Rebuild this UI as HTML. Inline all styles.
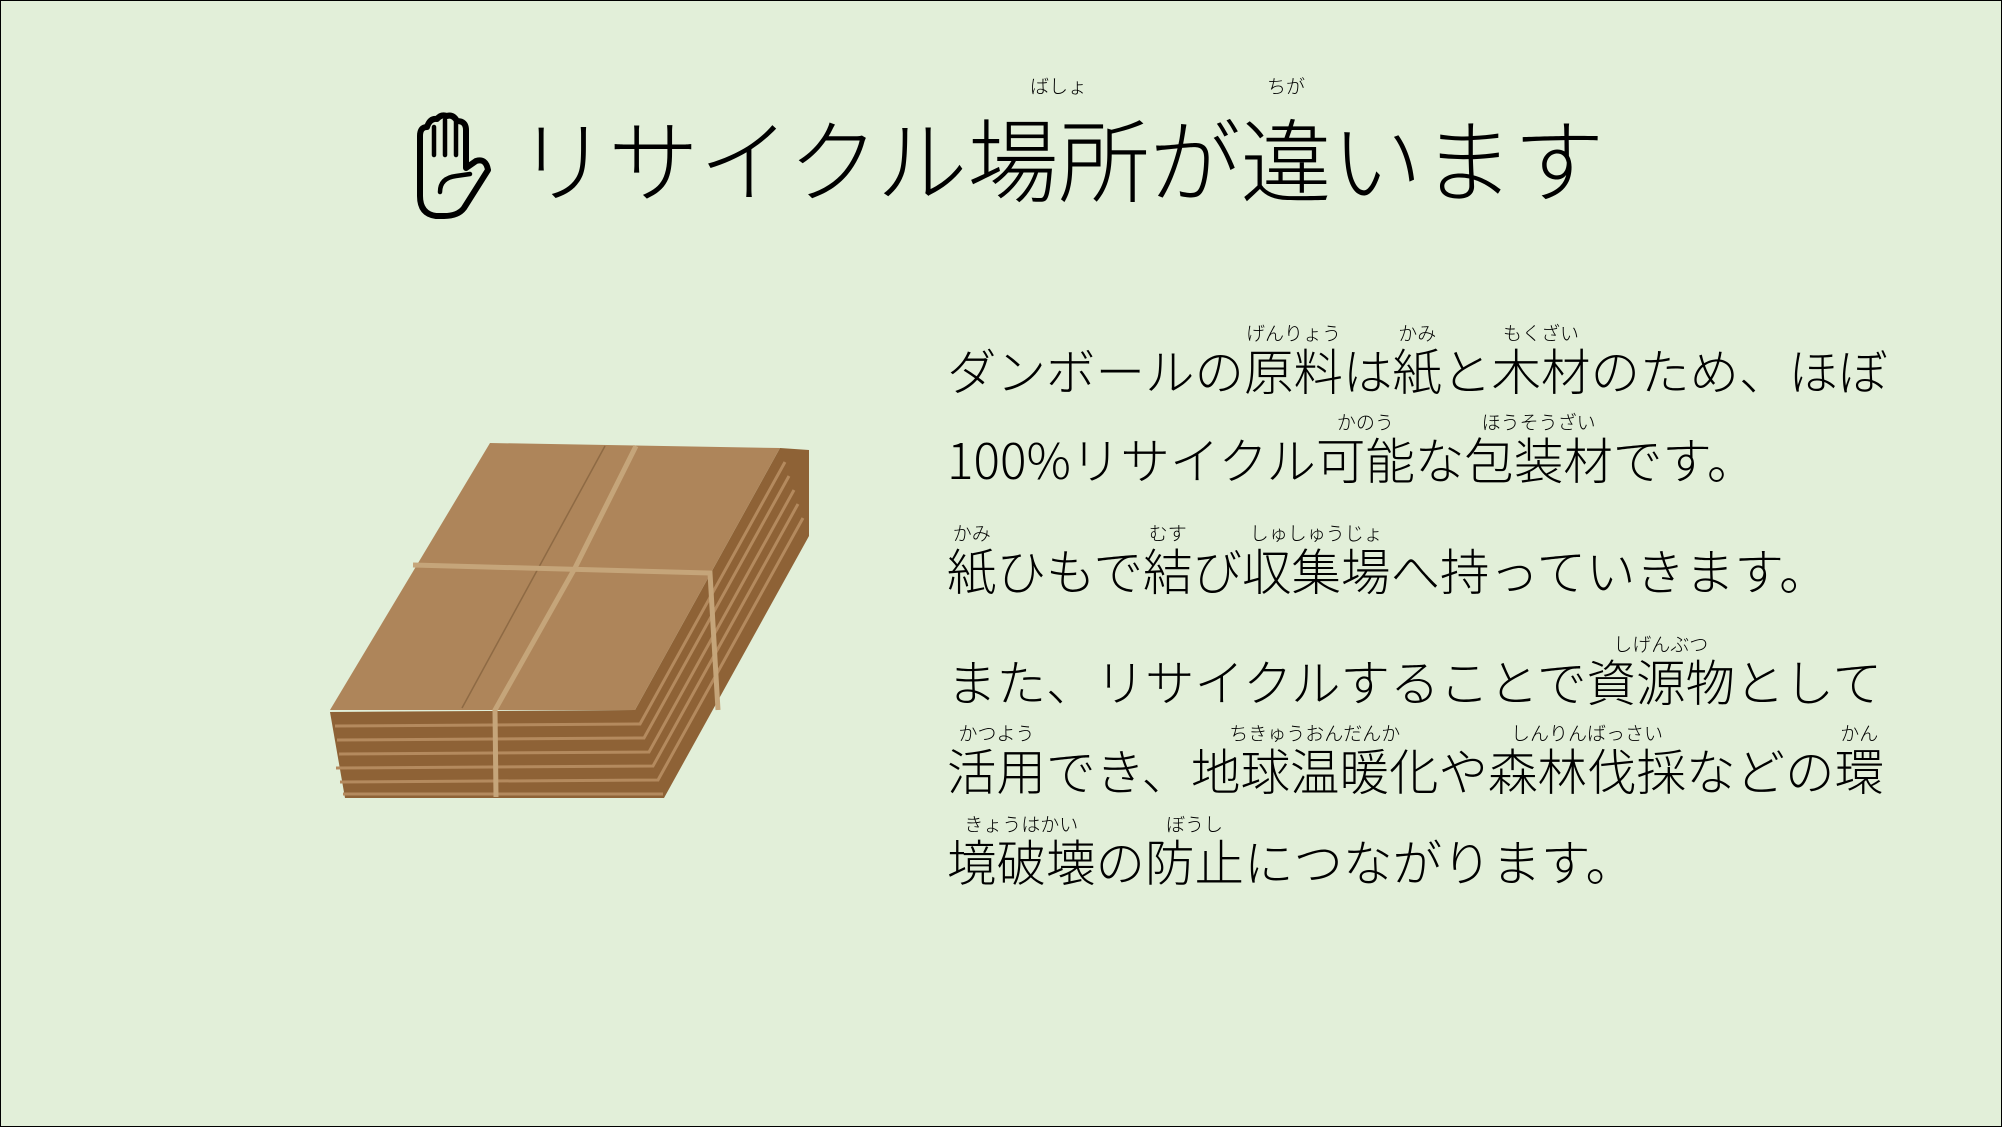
<!DOCTYPE html>
<html><head><meta charset="utf-8"><style>
html,body{margin:0;padding:0}
body{width:2002px;height:1127px;position:relative;background:#e2efd9;overflow:hidden;font-family:"Noto Sans CJK JP","Liberation Sans",sans-serif;color:#000}
.frame{position:absolute;left:0;top:0;width:2000px;height:1125px;border:1px solid #000}
.t{position:absolute;white-space:nowrap;font-weight:300}
ruby{ruby-align:center}
ruby rt{font-size:19px;line-height:1;ruby-align:center;letter-spacing:0}
.title{left:517px;top:94px;font-size:91px;line-height:91px}
.title rt{font-size:19px;position:relative;top:-18px}
.b{left:947px;font-size:49.5px;line-height:50px}
.b rt{position:relative;top:-3px}
</style></head><body>
<div class="frame"></div>
<svg style="position:absolute;left:400px;top:110px" width="110" height="110" viewBox="0 0 110 110">
<path d="M20 86 L20 26 Q20 17 27 17 Q30 8 37 9 Q41 4 47 6 Q53 4 57 11 Q66 11 66 20 L66 58 L76 51 Q86 48 88 60 L64 98 Q58 106 44 106 L36 106 Q20 104 20 86 Z" fill="none" stroke="#000" stroke-width="6" stroke-linejoin="round"/>
<path d="M34 17 L34 45 M45 10 L45 45 M56 12 L56 45" stroke="#000" stroke-width="4.5" stroke-linecap="round"/>
<path d="M40 82 Q40 68 56 66 L70 64" fill="none" stroke="#000" stroke-width="4.5" stroke-linecap="round"/>
</svg>
<div class="t title">リサイクル<ruby>場所<rt>ばしょ</rt></ruby>が<ruby>違<rt>ちが</rt></ruby>います</div>

<div class="t b" style="top:326px">ダンボールの<ruby>原料<rt>げんりょう</rt></ruby>は<ruby>紙<rt>かみ</rt></ruby>と<ruby>木材<rt>もくざい</rt></ruby>のため、ほぼ</div>
<div class="t b" style="top:415px">100%リサイクル<ruby>可能<rt>かのう</rt></ruby>な<ruby>包装材<rt>ほうそうざい</rt></ruby>です。</div>
<div class="t b" style="top:526px"><ruby>紙<rt>かみ</rt></ruby>ひもで<ruby>結<rt>むす</rt></ruby>び<ruby>収集場<rt>しゅしゅうじょ</rt></ruby>へ持っていきます。</div>
<div class="t b" style="top:637px">また、リサイクルすることで<ruby>資源物<rt>しげんぶつ</rt></ruby>として</div>
<div class="t b" style="top:726px"><ruby>活用<rt>かつよう</rt></ruby>でき、<ruby>地球温暖化<rt>ちきゅうおんだんか</rt></ruby>や<ruby>森林伐採<rt>しんりんばっさい</rt></ruby>などの<ruby>環<rt>かん</rt></ruby></div>
<div class="t b" style="top:817px"><ruby>境破壊<rt>きょうはかい</rt></ruby>の<ruby>防止<rt>ぼうし</rt></ruby>につながります。</div>

<svg style="position:absolute;left:0;top:0" width="2002" height="1127">
<polygon points="780,448 809,450 809,536 664,798 345,798 330,712 635,710" fill="#8e6236"/>
<g stroke="#b48a5e" stroke-width="3" fill="none">
<path d="M335 726 L640 724 L785 462"/>
<path d="M337 740 L644 738 L789 476"/>
<path d="M339 754 L649 752 L794 490"/>
<path d="M336 768 L653 766 L798 504"/>
<path d="M340 782 L658 780 L803 518"/>
<path d="M343 794 L663 794"/>
</g>
<polygon points="490,443 780,448 635,710 330,710" fill="#ae855a"/>
<line x1="605" y1="446" x2="462" y2="708" stroke="#8e6a44" stroke-width="1.5"/>
<path d="M636 446 L575 568 L495 710 L496 797" stroke="#c5a57a" stroke-width="5" fill="none"/>
<path d="M413 565 L710 573 L718 710" stroke="#c5a57a" stroke-width="5" fill="none"/>
</svg>
</body></html>
